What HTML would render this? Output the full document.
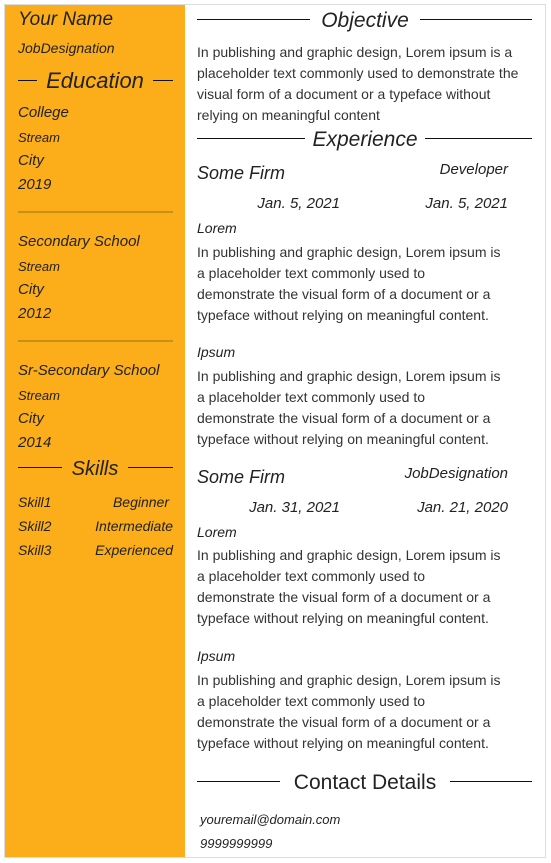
<!DOCTYPE html>
<html><head><meta charset="utf-8"><style>
body{margin:0;width:551px;height:863px;background:#fff;position:relative;overflow:hidden;font-family:"Liberation Sans",sans-serif;color:#222;}
.frame{position:absolute;left:4px;top:4px;width:540px;height:852px;border:1px solid #ddd;}
.side{position:absolute;left:5px;top:5px;width:180px;height:852px;background:#fbae1a;}
.t{position:absolute;white-space:nowrap;line-height:20px;height:20px;}
.i{font-style:italic;}
.r{text-align:right;}
.c{text-align:center;}
.h{position:absolute;height:1px;background:#111;}
.sep{position:absolute;left:18px;width:155px;height:2px;background:#c98f18;}
.p{font-size:14px;left:197px;color:#333;}
</style></head><body>
<div class="frame"></div>
<div class="side"></div>

<div class="t i" style="left:18px;top:10px;font-size:19px;">Your Name</div>
<div class="t i" style="left:18px;top:38px;font-size:14px;">JobDesignation</div>
<div class="h" style="left:18px;top:80px;width:19px;"></div>
<div class="h" style="left:153px;top:80px;width:20px;"></div>
<div class="t i c" style="left:37px;width:116px;top:69px;font-size:22px;height:24px;line-height:24px;">Education</div>
<div class="t i" style="left:18px;top:103px;font-size:15px;">College</div>
<div class="t i" style="left:18px;top:128px;font-size:13px;">Stream</div>
<div class="t i" style="left:18px;top:151px;font-size:15px;">City</div>
<div class="t i" style="left:18px;top:175px;font-size:15px;">2019</div>
<div class="sep" style="top:211px;"></div>
<div class="t i" style="left:18px;top:232px;font-size:15px;">Secondary School</div>
<div class="t i" style="left:18px;top:257px;font-size:13px;">Stream</div>
<div class="t i" style="left:18px;top:280px;font-size:15px;">City</div>
<div class="t i" style="left:18px;top:304px;font-size:15px;">2012</div>
<div class="sep" style="top:340px;"></div>
<div class="t i" style="left:18px;top:361px;font-size:15px;">Sr-Secondary School</div>
<div class="t i" style="left:18px;top:386px;font-size:13px;">Stream</div>
<div class="t i" style="left:18px;top:409px;font-size:15px;">City</div>
<div class="t i" style="left:18px;top:433px;font-size:15px;">2014</div>
<div class="h" style="left:18px;top:467px;width:44px;"></div>
<div class="h" style="left:128px;top:467px;width:45px;"></div>
<div class="t i c" style="left:62px;width:66px;top:457px;font-size:20px;height:24px;line-height:24px;">Skills</div>
<div class="t i" style="left:18px;top:492px;font-size:14px;">Skill1</div>
<div class="t i r" style="left:60px;width:109px;top:492px;font-size:14px;">Beginner</div>
<div class="t i" style="left:18px;top:516px;font-size:14px;">Skill2</div>
<div class="t i r" style="left:60px;width:113px;top:516px;font-size:14px;">Intermediate</div>
<div class="t i" style="left:18px;top:540px;font-size:14px;">Skill3</div>
<div class="t i r" style="left:60px;width:113px;top:540px;font-size:14px;">Experienced</div>

<div class="h" style="left:197px;top:19px;width:113px;"></div>
<div class="h" style="left:420px;top:19px;width:112px;"></div>
<div class="t i c" style="left:310px;width:110px;top:9px;font-size:21px;height:24px;line-height:24px;">Objective</div>
<div class="t p" style="top:42px;">In publishing and graphic design, Lorem ipsum is a</div>
<div class="t p" style="top:63px;">placeholder text commonly used to demonstrate the</div>
<div class="t p" style="top:84px;">visual form of a document or a typeface without</div>
<div class="t p" style="top:105px;">relying on meaningful content</div>

<div class="h" style="left:197px;top:138px;width:108px;"></div>
<div class="h" style="left:425px;top:138px;width:107px;"></div>
<div class="t i c" style="left:305px;width:120px;top:128px;font-size:21px;height:24px;line-height:24px;">Experience</div>

<div class="t i" style="left:197px;top:162px;font-size:18px;height:22px;line-height:22px;">Some Firm</div>
<div class="t i r" style="left:380px;width:128px;top:160px;font-size:15px;">Developer</div>
<div class="t i r" style="left:230px;width:110px;top:194px;font-size:15px;">Jan. 5, 2021</div>
<div class="t i r" style="left:398px;width:110px;top:194px;font-size:15px;">Jan. 5, 2021</div>
<div class="t i" style="left:197px;top:218px;font-size:14px;">Lorem</div>
<div class="t p" style="top:242px;">In publishing and graphic design, Lorem ipsum is</div>
<div class="t p" style="top:263px;">a placeholder text commonly used to</div>
<div class="t p" style="top:284px;">demonstrate the visual form of a document or a</div>
<div class="t p" style="top:305px;">typeface without relying on meaningful content.</div>
<div class="t i" style="left:197px;top:342px;font-size:14px;">Ipsum</div>
<div class="t p" style="top:366px;">In publishing and graphic design, Lorem ipsum is</div>
<div class="t p" style="top:387px;">a placeholder text commonly used to</div>
<div class="t p" style="top:408px;">demonstrate the visual form of a document or a</div>
<div class="t p" style="top:429px;">typeface without relying on meaningful content.</div>

<div class="t i" style="left:197px;top:466px;font-size:18px;height:22px;line-height:22px;">Some Firm</div>
<div class="t i r" style="left:360px;width:148px;top:464px;font-size:15px;">JobDesignation</div>
<div class="t i r" style="left:230px;width:110px;top:498px;font-size:15px;">Jan. 31, 2021</div>
<div class="t i r" style="left:398px;width:110px;top:498px;font-size:15px;">Jan. 21, 2020</div>
<div class="t i" style="left:197px;top:522px;font-size:14px;">Lorem</div>
<div class="t p" style="top:545px;">In publishing and graphic design, Lorem ipsum is</div>
<div class="t p" style="top:566px;">a placeholder text commonly used to</div>
<div class="t p" style="top:587px;">demonstrate the visual form of a document or a</div>
<div class="t p" style="top:608px;">typeface without relying on meaningful content.</div>
<div class="t i" style="left:197px;top:646px;font-size:14px;">Ipsum</div>
<div class="t p" style="top:670px;">In publishing and graphic design, Lorem ipsum is</div>
<div class="t p" style="top:691px;">a placeholder text commonly used to</div>
<div class="t p" style="top:712px;">demonstrate the visual form of a document or a</div>
<div class="t p" style="top:733px;">typeface without relying on meaningful content.</div>

<div class="h" style="left:197px;top:781px;width:83px;"></div>
<div class="h" style="left:450px;top:781px;width:82px;"></div>
<div class="t c" style="left:280px;width:170px;top:771px;font-size:21px;height:24px;line-height:24px;">Contact Details</div>
<div class="t i" style="left:200px;top:810px;font-size:13px;">youremail@domain.com</div>
<div class="t i" style="left:200px;top:834px;font-size:13px;">9999999999</div>
</body></html>
